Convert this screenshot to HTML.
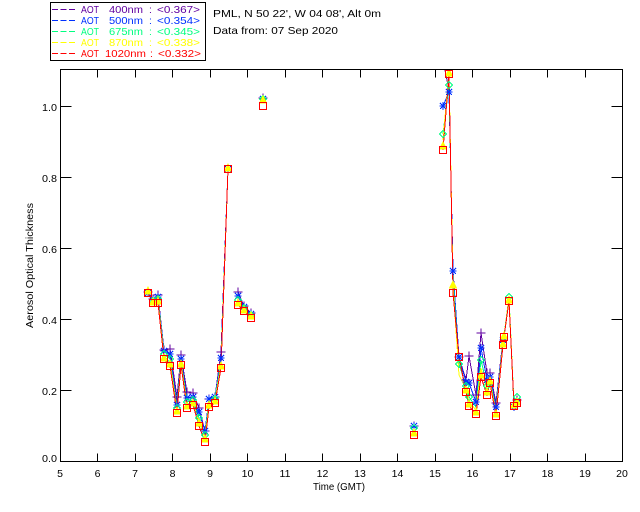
<!DOCTYPE html>
<html><head><meta charset="utf-8"><style>
html,body{margin:0;padding:0;background:#fff;width:640px;height:512px;overflow:hidden}
svg{display:block}
text{font-family:"Liberation Sans",sans-serif;font-size:10.5px;fill:#000}
.l polyline,.a path{fill:none;shape-rendering:crispEdges;stroke-width:1}
.a path{stroke:#000}
.xt{text-anchor:middle}
</style></head><body>
<svg width="640" height="512" viewBox="0 0 640 512" xmlns="http://www.w3.org/2000/svg">
<defs>
<clipPath id="c"><rect x="61" y="70" width="561" height="391"/></clipPath>
<path id="p" d="M-4.5 0H4.5M0-4.5V4.5" stroke="#6000a0" fill="none" shape-rendering="crispEdges"/>
<path id="b" d="M-3.5 0H3.5M0-4V4M-3-3L3 3M-3 3L3-3" stroke="#0030ff" fill="none" shape-rendering="crispEdges"/>
<path id="g" d="M0-3.5L3.5 0L0 3.5L-3.5 0Z" stroke="#00ff80" fill="none" shape-rendering="crispEdges"/>
<path id="y" d="M0-4L3.5 3H-3.5Z" stroke="#ffff00" fill="#ffff00" shape-rendering="crispEdges"/>
<rect id="r" x="-3.5" y="-3.5" width="7" height="7" stroke="#ff0000" fill="none" shape-rendering="crispEdges"/>
</defs>

<g class="a">
<path d="M50.5 2.5H205.5V60.5H50.5Z"/>
<path d="M60.5 69.5H622.5V461.5H60.5Z"/>
<path d="M97.5 69.5v8M135.5 69.5v8M172.5 69.5v8M210.5 69.5v8M247.5 69.5v8M285.5 69.5v8M322.5 69.5v8M360.5 69.5v8M397.5 69.5v8M435.5 69.5v8M472.5 69.5v8M510.5 69.5v8M547.5 69.5v8M585.5 69.5v8"/>
<path d="M97.5 461.5v-8M135.5 461.5v-8M172.5 461.5v-8M210.5 461.5v-8M247.5 461.5v-8M285.5 461.5v-8M322.5 461.5v-8M360.5 461.5v-8M397.5 461.5v-8M435.5 461.5v-8M472.5 461.5v-8M510.5 461.5v-8M547.5 461.5v-8M585.5 461.5v-8"/>
<path d="M60.5 106.5h11M60.5 177.5h11M60.5 248.5h11M60.5 319.5h11M60.5 390.5h11"/>
<path d="M622.5 106.5h-11M622.5 177.5h-11M622.5 248.5h-11M622.5 319.5h-11M622.5 390.5h-11"/>
</g>

<g>
<path d="M52 9.5H75" stroke="#6000a0" stroke-dasharray="6 2.5" shape-rendering="crispEdges"/>
<text x="81" y="13" textLength="18" lengthAdjust="spacingAndGlyphs" style="fill:#6000a0">AOT</text>
<text x="109" y="13" textLength="34" lengthAdjust="spacingAndGlyphs" style="fill:#6000a0">400nm</text>
<text x="149" y="13" style="fill:#6000a0">:</text>
<text x="157" y="13" textLength="43" lengthAdjust="spacingAndGlyphs" style="fill:#6000a0">&lt;0.367&gt;</text>
</g>
<g>
<path d="M52 20.5H75" stroke="#0030ff" stroke-dasharray="6 2.5" shape-rendering="crispEdges"/>
<text x="81" y="24" textLength="18" lengthAdjust="spacingAndGlyphs" style="fill:#0030ff">AOT</text>
<text x="109" y="24" textLength="34" lengthAdjust="spacingAndGlyphs" style="fill:#0030ff">500nm</text>
<text x="149" y="24" style="fill:#0030ff">:</text>
<text x="157" y="24" textLength="43" lengthAdjust="spacingAndGlyphs" style="fill:#0030ff">&lt;0.354&gt;</text>
</g>
<g>
<path d="M52 31.5H75" stroke="#00ff80" stroke-dasharray="6 2.5" shape-rendering="crispEdges"/>
<text x="81" y="35" textLength="18" lengthAdjust="spacingAndGlyphs" style="fill:#00ff80">AOT</text>
<text x="109" y="35" textLength="34" lengthAdjust="spacingAndGlyphs" style="fill:#00ff80">675nm</text>
<text x="149" y="35" style="fill:#00ff80">:</text>
<text x="157" y="35" textLength="43" lengthAdjust="spacingAndGlyphs" style="fill:#00ff80">&lt;0.345&gt;</text>
</g>
<g>
<path d="M52 42.5H75" stroke="#ffff00" stroke-dasharray="6 2.5" shape-rendering="crispEdges"/>
<text x="81" y="46" textLength="18" lengthAdjust="spacingAndGlyphs" style="fill:#ffff00">AOT</text>
<text x="109" y="46" textLength="34" lengthAdjust="spacingAndGlyphs" style="fill:#ffff00">870nm</text>
<text x="149" y="46" style="fill:#ffff00">:</text>
<text x="157" y="46" textLength="43" lengthAdjust="spacingAndGlyphs" style="fill:#ffff00">&lt;0.338&gt;</text>
</g>
<g>
<path d="M52 53.5H75" stroke="#ff0000" stroke-dasharray="6 2.5" shape-rendering="crispEdges"/>
<text x="81" y="57" textLength="18" lengthAdjust="spacingAndGlyphs" style="fill:#ff0000">AOT</text>
<text x="105" y="57" textLength="41" lengthAdjust="spacingAndGlyphs" style="fill:#ff0000">1020nm</text>
<text x="150" y="57" style="fill:#ff0000">:</text>
<text x="158" y="57" textLength="43" lengthAdjust="spacingAndGlyphs" style="fill:#ff0000">&lt;0.332&gt;</text>
</g>

<text x="213" y="17" textLength="168" lengthAdjust="spacingAndGlyphs">PML, N 50 22', W 04 08', Alt 0m</text>
<text x="213" y="34" textLength="125" lengthAdjust="spacingAndGlyphs">Data from: 07 Sep 2020</text>

<g>
<text x="42" y="111" textLength="15" lengthAdjust="spacingAndGlyphs">1.0</text>
<text x="42" y="182" textLength="15" lengthAdjust="spacingAndGlyphs">0.8</text>
<text x="42" y="253" textLength="15" lengthAdjust="spacingAndGlyphs">0.6</text>
<text x="42" y="324" textLength="15" lengthAdjust="spacingAndGlyphs">0.4</text>
<text x="42" y="395" textLength="15" lengthAdjust="spacingAndGlyphs">0.2</text>
<text x="42" y="462" textLength="15" lengthAdjust="spacingAndGlyphs">0.0</text>
</g>
<g class="xt">
<text x="60" y="477">5</text><text x="97.5" y="477">6</text><text x="135" y="477">7</text><text x="172.5" y="477">8</text><text x="210" y="477">9</text><text x="247.5" y="477">10</text><text x="285" y="477">11</text><text x="322.5" y="477">12</text><text x="360" y="477">13</text><text x="397.5" y="477">14</text><text x="435" y="477">15</text><text x="472.5" y="477">16</text><text x="510" y="477">17</text><text x="547.5" y="477">18</text><text x="585" y="477">19</text><text x="622" y="477">20</text>
</g>
<text x="313" y="490" textLength="52" lengthAdjust="spacingAndGlyphs">Time (GMT)</text>
<text transform="translate(33 328) rotate(-90)" textLength="125" lengthAdjust="spacingAndGlyphs" style="font-size:10px">Aerosol Optical Thickness</text>

<g clip-path="url(#c)">
<g class="l">
<g stroke="#6000a0">
<polyline points="148,292 153,299 158,295 164,350 170,349 177,397 181,355 187,392 193,393 199,408 205,431 209,399 215,397 221,352 228,169"/>
<polyline points="238,292 244,306 251,313"/>
<polyline points="443,60 449,90 453,270 459,357 466,380 469,356 476,395 481,333 487,373 490,373 496,403 503,339 504,336 509,299 514,407 517,400"/>
</g>
<g stroke="#0030ff">
<polyline points="148,293 153,300 158,297 164,351 170,354 177,405 181,359 187,398 193,397 199,412 205,431 209,399 215,397 221,358 228,169"/>
<polyline points="238,296 244,307 251,314"/>
<polyline points="443,106 449,92 453,271 459,357 466,382 469,383 476,402 481,348 487,380 490,377 496,407 503,340 504,337 509,300 514,407 517,401"/>
</g>
<g stroke="#00ff80">
<polyline points="148,293 153,301 158,299 164,354 170,359 177,408 181,361 187,402 193,400 199,418 205,435 209,402 215,399 221,362 228,169"/>
<polyline points="238,300 244,308 251,315"/>
<polyline points="443,134 449,85 453,280 459,364 466,386 469,397 476,407 481,360 487,386 490,379 496,411 503,342 504,336 509,297 514,404 517,397"/>
</g>
<g stroke="#ffff00">
<polyline points="148,291 153,302 158,301 164,357 170,362 177,411 181,363 187,405 193,403 199,422 205,438 209,405 215,401 221,365 228,169"/>
<polyline points="238,302 244,309 251,316"/>
<polyline points="443,140 449,72 453,285 459,375 466,389 469,402 476,410 481,368 487,390 490,381 496,413 503,343 504,337 509,298 514,405 517,399"/>
</g>
<g stroke="#ff0000">
<polyline points="148,293 153,303 158,303 164,359 170,366 177,413 181,365 187,408 193,405 199,426 205,442 209,407 215,403 221,368 228,169"/>
<polyline points="238,305 244,311 251,318"/>
<polyline points="443,150 449,74 453,293 459,357 466,392 469,406 476,414 481,377 487,395 490,383 496,416 503,345 504,337 509,301 514,406 517,403"/>
</g>
</g>
<g>
<use href="#p" x="148" y="292"/><use href="#p" x="153" y="299"/><use href="#p" x="158" y="295"/><use href="#p" x="164" y="350"/><use href="#p" x="170" y="349"/><use href="#p" x="177" y="397"/><use href="#p" x="181" y="355"/><use href="#p" x="187" y="392"/><use href="#p" x="193" y="393"/><use href="#p" x="199" y="408"/><use href="#p" x="205" y="431"/><use href="#p" x="209" y="399"/><use href="#p" x="215" y="397"/><use href="#p" x="221" y="352"/><use href="#p" x="238" y="292"/><use href="#p" x="244" y="306"/><use href="#p" x="251" y="313"/><use href="#p" x="263" y="98"/><use href="#p" x="414" y="426"/><use href="#p" x="459" y="357"/><use href="#p" x="466" y="380"/><use href="#p" x="469" y="356"/><use href="#p" x="476" y="395"/><use href="#p" x="481" y="333"/><use href="#p" x="487" y="373"/><use href="#p" x="490" y="373"/><use href="#p" x="496" y="403"/><use href="#p" x="517" y="400"/>

<use href="#b" x="148" y="293"/><use href="#b" x="153" y="300"/><use href="#b" x="158" y="297"/><use href="#b" x="164" y="351"/><use href="#b" x="170" y="354"/><use href="#b" x="177" y="405"/><use href="#b" x="181" y="359"/><use href="#b" x="187" y="398"/><use href="#b" x="193" y="397"/><use href="#b" x="199" y="412"/><use href="#b" x="205" y="431"/><use href="#b" x="209" y="399"/><use href="#b" x="215" y="397"/><use href="#b" x="221" y="358"/><use href="#b" x="228" y="169"/><use href="#b" x="238" y="296"/><use href="#b" x="244" y="307"/><use href="#b" x="251" y="314"/><use href="#b" x="263" y="99"/><use href="#b" x="414" y="426"/><use href="#b" x="443" y="106"/><use href="#b" x="449" y="92"/><use href="#b" x="453" y="271"/><use href="#b" x="459" y="357"/><use href="#b" x="466" y="382"/><use href="#b" x="469" y="383"/><use href="#b" x="476" y="402"/><use href="#b" x="481" y="348"/><use href="#b" x="487" y="380"/><use href="#b" x="490" y="377"/><use href="#b" x="496" y="407"/><use href="#b" x="503" y="340"/><use href="#b" x="514" y="407"/><use href="#b" x="517" y="401"/>

<use href="#g" x="153" y="301"/><use href="#g" x="158" y="299"/><use href="#g" x="164" y="354"/><use href="#g" x="170" y="359"/><use href="#g" x="177" y="408"/><use href="#g" x="187" y="402"/><use href="#g" x="193" y="400"/><use href="#g" x="199" y="418"/><use href="#g" x="205" y="435"/><use href="#g" x="215" y="399"/><use href="#g" x="238" y="300"/><use href="#g" x="244" y="308"/><use href="#g" x="251" y="315"/><use href="#g" x="263" y="99"/><use href="#g" x="414" y="428"/><use href="#g" x="443" y="134"/><use href="#g" x="449" y="85"/><use href="#g" x="459" y="364"/><use href="#g" x="466" y="386"/><use href="#g" x="469" y="397"/><use href="#g" x="481" y="360"/><use href="#g" x="487" y="386"/><use href="#g" x="509" y="297"/><use href="#g" x="517" y="397"/>

<use href="#y" x="148" y="291"/><use href="#y" x="153" y="302"/><use href="#y" x="158" y="301"/><use href="#y" x="164" y="358"/><use href="#y" x="170" y="364"/><use href="#y" x="177" y="411"/><use href="#y" x="181" y="364"/><use href="#y" x="187" y="406"/><use href="#y" x="193" y="403"/><use href="#y" x="199" y="423"/><use href="#y" x="205" y="439"/><use href="#y" x="209" y="405"/><use href="#y" x="215" y="401"/><use href="#y" x="221" y="366"/><use href="#y" x="228" y="168"/><use href="#y" x="238" y="303"/><use href="#y" x="244" y="310"/><use href="#y" x="251" y="316"/><use href="#y" x="263" y="100"/><use href="#y" x="414" y="433"/><use href="#y" x="443" y="146"/><use href="#y" x="449" y="73"/><use href="#y" x="453" y="285"/><use href="#y" x="466" y="390"/><use href="#y" x="469" y="404"/><use href="#y" x="476" y="412"/><use href="#y" x="481" y="375"/><use href="#y" x="487" y="392"/><use href="#y" x="490" y="381"/><use href="#y" x="496" y="414"/><use href="#y" x="503" y="344"/><use href="#y" x="504" y="336"/><use href="#y" x="509" y="300"/><use href="#y" x="514" y="405"/><use href="#y" x="517" y="402"/>

<use href="#r" x="148" y="293"/><use href="#r" x="153" y="303"/><use href="#r" x="158" y="303"/><use href="#r" x="164" y="359"/><use href="#r" x="170" y="366"/><use href="#r" x="177" y="413"/><use href="#r" x="181" y="365"/><use href="#r" x="187" y="408"/><use href="#r" x="193" y="405"/><use href="#r" x="199" y="426"/><use href="#r" x="205" y="442"/><use href="#r" x="209" y="407"/><use href="#r" x="215" y="403"/><use href="#r" x="221" y="368"/><use href="#r" x="228" y="169"/><use href="#r" x="238" y="305"/><use href="#r" x="244" y="311"/><use href="#r" x="251" y="318"/><use href="#r" x="263" y="106"/><use href="#r" x="414" y="435"/><use href="#r" x="443" y="150"/><use href="#r" x="449" y="74"/><use href="#r" x="453" y="293"/><use href="#r" x="459" y="357"/><use href="#r" x="466" y="392"/><use href="#r" x="469" y="406"/><use href="#r" x="476" y="414"/><use href="#r" x="481" y="377"/><use href="#r" x="487" y="395"/><use href="#r" x="490" y="383"/><use href="#r" x="496" y="416"/><use href="#r" x="503" y="345"/><use href="#r" x="504" y="337"/><use href="#r" x="509" y="301"/><use href="#r" x="514" y="406"/><use href="#r" x="517" y="403"/>
</g>
</g>
</svg>
</body></html>
